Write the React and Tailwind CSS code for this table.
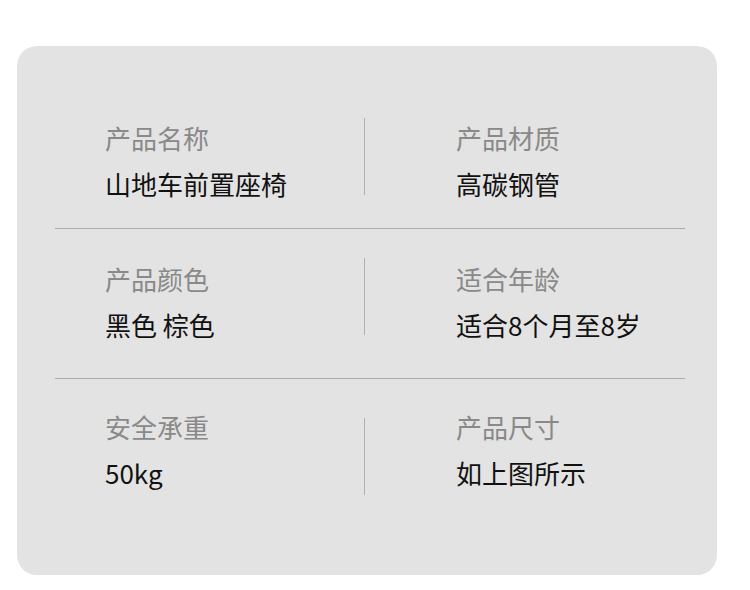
import React from 'react';

const rows = [
  { h: 'h-[183px] border-b', pt: 'pt-[77px]', dv: 'mt-[72px]', cells: [['产品名称', '山地车前置座椅'], ['产品材质', '高碳钢管']] },
  { h: 'h-[150px] border-b', pt: 'pt-[35px]', dv: 'mt-[29px]', cells: [['产品颜色', '黑色 棕色'], ['适合年龄', '适合8个月至8岁']] },
  { h: 'flex-1', pt: 'pt-[33px]', dv: 'mt-[39px]', cells: [['安全承重', '50kg'], ['产品尺寸', '如上图所示']] },
];

const Cell = ({ label, value, className }) => (
  <div className={className}>
    <div className="text-[26px] leading-[30px] text-[#898989]">{label}</div>
    <div className="mt-[16px] text-[26px] leading-[30px] text-[#111]">{value}</div>
  </div>
);

const App = () => {
  return (
    <div className="min-h-screen bg-white pt-[46px] pl-[17px] font-['Noto_Sans_CJK_SC','Noto_Sans',sans-serif]">
      <div className="w-[700px] h-[529px] bg-[#e3e3e3] rounded-[20px] pl-[38px] pr-[32px] flex flex-col">
        {rows.map((row, i) => (
          <div key={i} className={`flex border-[#ababab] ${row.h}`}>
            <Cell label={row.cells[0][0]} value={row.cells[0][1]} className={`w-[309px] pl-[50px] ${row.pt}`} />
            <div className={`w-px h-[77px] bg-[#b0b0b0] ${row.dv}`} />
            <Cell label={row.cells[1][0]} value={row.cells[1][1]} className={`flex-1 pl-[91px] ${row.pt}`} />
          </div>
        ))}
      </div>
    </div>
  );
};

export default App;
